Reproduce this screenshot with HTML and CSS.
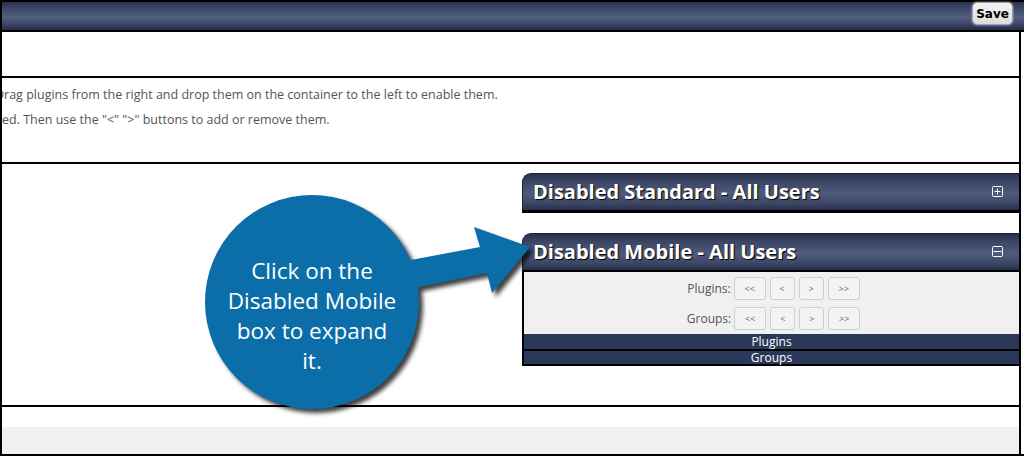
FILE: index.html
```html
<!DOCTYPE html>
<html lang="en">
<head>
  <meta charset="UTF-8" />
  <title>Plugin Settings</title>
  <link rel="stylesheet" href="styles.css">
</head>
<body>
  <div class="frame">
    <div class="topbar">
      <button class="save">Save</button>
    </div>

    <div class="row row-blank"></div>

    <div class="row row-help">
      <p class="help first">Drag plugins from the right and drop them on the container to the left to enable them.</p>
      <p class="help">ed. Then use the "&lt;" "&gt;" buttons to add or remove them.</p>
    </div>

    <div class="row row-main">
      <div class="col-right">
        <div class="panel">
          <div class="panel-head">
            <span>Disabled Standard - All Users</span>
            <svg class="toggle" width="11" height="11" viewBox="0 0 11 11">
              <rect x="0.5" y="0.5" width="10" height="10" rx="1" fill="none" stroke="#fff"/>
              <path d="M2.5 5.5h6M5.5 2.5v6" stroke="#fff"/>
            </svg>
          </div>
        </div>

        <div class="panel open">
          <div class="panel-head">
            <span>Disabled Mobile - All Users</span>
            <svg class="toggle" width="11" height="11" viewBox="0 0 11 11">
              <rect x="0.5" y="0.5" width="10" height="10" rx="1" fill="none" stroke="#fff"/>
              <path d="M1.5 5.5h8" stroke="#fff"/>
            </svg>
          </div>
          <div class="panel-body">
            <div class="mover">
              <span class="mover-label">Plugins:</span>
              <button class="mv wide">&lt;&lt;</button>
              <button class="mv">&lt;</button>
              <button class="mv">&gt;</button>
              <button class="mv wide">&gt;&gt;</button>
            </div>
            <div class="mover">
              <span class="mover-label">Groups:</span>
              <button class="mv wide">&lt;&lt;</button>
              <button class="mv">&lt;</button>
              <button class="mv">&gt;</button>
              <button class="mv wide">&gt;&gt;</button>
            </div>
          </div>
          <div class="panel-bar">Plugins</div>
          <div class="panel-bar">Groups</div>
        </div>
      </div>
    </div>

    <div class="row row-foot"></div>
    <div class="footer"></div>
  </div>

  <!-- annotation bubble laid over the page -->
  <div class="callout">
    <svg class="callout-shape" width="1024" height="456" viewBox="0 0 1024 456">
      <circle cx="312" cy="302" r="107" fill="#0b6ea8"/>
      <polygon points="400,262 480,247 474,227 530,247 492,293 487,273 410,289" fill="#0b6ea8"/>
    </svg>
    <div class="callout-text">Click on the<br>Disabled Mobile<br>box to expand<br>it.</div>
  </div>
</body>
</html>
```

FILE: styles.css
```css
body {
  margin: 0;
  width: 1024px;
  height: 456px;
  overflow: hidden;
  background: #fff;
  font-family: "Open Sans", sans-serif;
  position: relative;
}

.frame {
  border-top: 2px solid #000;
  border-left: 2px solid #000;
  border-bottom: 2px solid #000;
  height: 452px;
  display: flex;
  flex-direction: column;
}

/* top toolbar */
.topbar {
  height: 28px;
  border-bottom: 2px solid #000;
  background: linear-gradient(#27314e, #3f4a6a 25%, #525e7e 55%, #3b4665 80%, #222b46);
  display: flex;
  justify-content: flex-end;
  align-items: flex-start;
  padding-right: 11px;
}

.save {
  height: 23px;
  width: 41px;
  padding: 0;
  border: 1px solid #9aa0ad;
  border-radius: 5px;
  background: linear-gradient(#f4f4f4, #dcdcdc);
  box-shadow: 0 0 2px #c8cfdc;
  font-family: "DejaVu Sans", sans-serif;
  font-weight: bold;
  font-size: 12px;
  color: #000;
}

.row {
  border-right: 2px solid #000;
  border-bottom: 2px solid #000;
  margin-right: 3px;
  overflow: hidden;
}

.row-blank {
  height: 44px;
}

.row-help {
  height: 77px;
  padding-top: 7px;
}

.help {
  margin: 0 0 5px;
  line-height: 20px;
  font-size: 12.5px;
  color: #555;
  white-space: nowrap;
}

.help.first {
  margin-left: -7px;
}

.row-main {
  height: 241px;
  display: flex;
  justify-content: flex-end;
}

.col-right {
  width: 497px;
  padding-top: 9px;
}

/* collapsible panels */
.panel {
  margin-bottom: 20px;
}

.panel-head {
  height: 34px;
  padding: 0 16px 2px 10px;
  border-top: 1px solid #1b2238;
  border-left: 1px solid #1b2238;
  border-bottom: 3px solid #000;
  border-top-left-radius: 9px;
  background: linear-gradient(#28314d, #3e4968 25%, #4f5b7b 55%, #3d4867 80%, #262f4b);
  display: flex;
  align-items: center;
  justify-content: space-between;
  color: #fff;
  font-weight: bold;
  font-size: 20px;
  text-shadow: 1px 1px 1px #000;
}

.panel.open .panel-head {
  border-bottom-width: 2px;
}

.panel-body {
  height: 52px;
  padding: 5px 0;
  border-left: 2px solid #000;
  background: #f0f0f0;
  display: flex;
  flex-direction: column;
  gap: 7px;
  align-items: center;
}

.mover {
  display: flex;
  align-items: center;
  gap: 4px;
  height: 23px;
  padding-left: 4px;
}

.mover-label {
  font-size: 12px;
  color: #555;
  margin-right: -1px;
}

.mv {
  width: 25px;
  height: 23px;
  padding: 0;
  border: 1px solid #c9d0d8;
  border-radius: 3px;
  background: #f3f3f3;
  font-family: "Open Sans", sans-serif;
  font-size: 9px;
  color: #666;
}

.mv.wide {
  width: 32px;
}

.panel-bar {
  height: 15px;
  line-height: 15px;
  border-left: 2px solid #000;
  border-bottom: 2px solid #000;
  background: #2a3959;
  color: #fff;
  text-align: center;
  font-size: 12px;
}

.panel-bar + .panel-bar {
  height: 13px;
  line-height: 13px;
}

.row-foot {
  height: 20px;
  border-bottom: none;
}

.footer {
  flex: 1;
  background: #f0f0f0;
  margin-right: 3px;
  border-right: 2px solid #000;
}

/* annotation */
.callout {
  position: absolute;
  left: 0;
  top: 0;
  width: 1024px;
  height: 456px;
  pointer-events: none;
}

.callout-shape {
  filter: drop-shadow(4px 4px 2px rgba(0, 0, 0, 0.75));
}

.callout-text {
  position: absolute;
  left: 202px;
  top: 256px;
  width: 220px;
  text-align: center;
  color: #fff;
  font-size: 22.5px;
  line-height: 30px;
}
```
